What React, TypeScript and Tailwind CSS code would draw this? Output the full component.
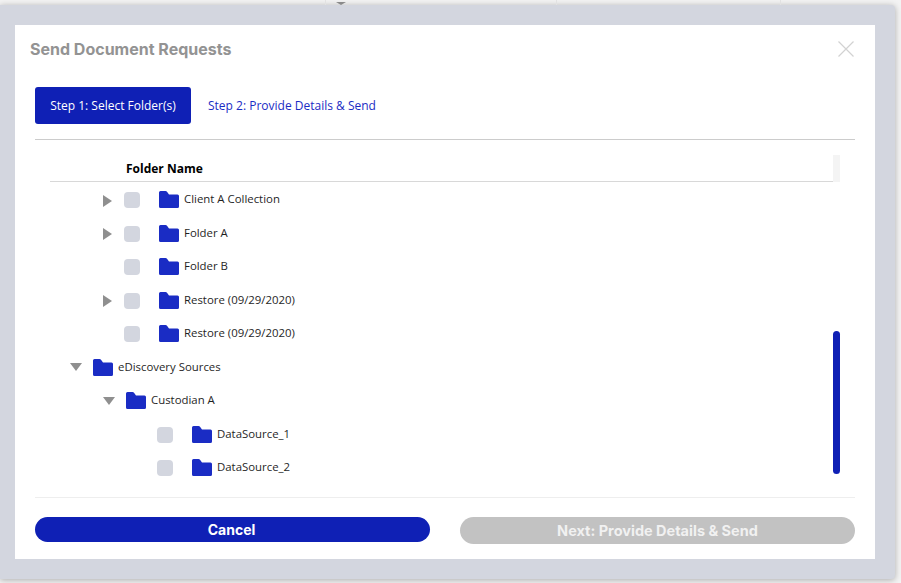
const folders = [
  { name: "Client A Collection", pad: "pl-[53px]", arrow: "right", check: true },
  { name: "Folder A", pad: "pl-[53px]", arrow: "right", check: true },
  { name: "Folder B", pad: "pl-[53px]", arrow: "none", check: true },
  { name: "Restore (09/29/2020)", pad: "pl-[53px]", arrow: "right", check: true },
  { name: "Restore (09/29/2020)", pad: "pl-[53px]", arrow: "none", check: true },
  { name: "eDiscovery Sources", pad: "pl-[20px]", arrow: "down", check: false },
  { name: "Custodian A", pad: "pl-[53px]", arrow: "down", check: false },
  { name: "DataSource_1", pad: "pl-[86px]", arrow: "none", check: true },
  { name: "DataSource_2", pad: "pl-[86px]", arrow: "none", check: true },
];

function Arrow({ dir }: { dir: string }) {
  if (dir === "none") return <span className="w-[21px] shrink-0" />;
  return (
    <svg width="21" height="14" viewBox="0 0 21 14" className="mt-[1px] shrink-0">
      {dir === "right" ? <path d="M0 1 L9 7 L0 13 Z" fill="#8f8f8f" /> : <path d="M0 2 L12 2 L6 10 Z" fill="#8f8f8f" />}
    </svg>
  );
}

function FolderIcon() {
  return (
    <svg width="20" height="17" viewBox="0 0 20 17" className="-mt-[1px] shrink-0">
      <path
        d="M0 1.5 Q0 0 1.5 0 L6.5 0 Q7.5 0 8.2 1 L10 3.5 L18.5 3.5 Q20 3.5 20 5 L20 15.5 Q20 17 18.5 17 L1.5 17 Q0 17 0 15.5 Z"
        fill="#1a2cc4"
      />
    </svg>
  );
}

export default function App() {
  return (
    <div className="relative h-[583px] w-[901px] overflow-hidden bg-[#f3f3f3] font-['Open_Sans',sans-serif]">
      <div className="absolute left-[325px] top-0 h-[5px] w-px bg-[#e2e2e2]" />
      <div className="absolute left-[336px] top-[2px] h-0 w-0 border-x-[5px] border-t-[3px] border-x-transparent border-t-[#8a8a8a]" />
      <div className="absolute left-[556px] top-0 h-[5px] w-px bg-[#e2e2e2]" />
      <div className="absolute left-[780px] top-0 h-[5px] w-px bg-[#e2e2e2]" />

      <div className="mt-[5px] h-[574px] w-[895px] rounded-tr-[4px] rounded-br-[4px] bg-[#d3d6df] pb-5 pl-[15px] pr-5 pt-5 shadow-[0_1px_6px_rgba(0,0,0,0.3)]">
        <div className="flex h-[534px] w-[860px] flex-col bg-white px-5">
          <div className="flex h-[48px] items-center justify-between">
            <h1 className="-ml-[5px] -mt-[1px] font-['Inter',sans-serif] text-[16px] font-bold text-[#939393]">Send Document Requests</h1>
            <svg width="16" height="16" viewBox="0 0 16 16" className="mr-[1px]">
              <path d="M0.5 0.5 L15.5 15.5 M15.5 0.5 L0.5 15.5" stroke="#d2d2d2" strokeWidth="1.2" fill="none" />
            </svg>
          </div>

          <div className="mt-[14px] flex items-center border-b border-[#cccccc] pb-[15px]">
            <div className="flex h-[37px] w-[156px] items-center justify-center rounded-[3px] bg-[#0f20b5] text-[12px] text-white">
              Step 1: Select Folder(s)
            </div>
            <div className="ml-[17px] text-[12px] text-[#1a2cc4]">Step 2: Provide Details &amp; Send</div>
          </div>

          <div className="ml-[15px] mt-[15px] flex h-[27px] w-[790px]">
            <div className="flex h-[27px] w-[783px] items-center border-b border-[#d8d8d8] pl-[76px] pt-[1px] text-[12px] font-bold text-black">
              Folder Name
            </div>
            <div className="h-[27px] w-[7px] bg-[#f4f4f4]" />
          </div>

          <div className="ml-[15px] flex h-[315px] w-[790px]">
            <div className="w-[783px] pt-[1.25px]">
              {folders.map((f, i) => (
                <div key={i} className={`flex h-[33.5px] items-center ${f.pad}`}>
                  <Arrow dir={f.arrow} />
                  {f.check && <span className="mr-[19px] h-4 w-4 shrink-0 rounded-[4px] bg-[#d3d6df]" />}
                  {!f.check && <span className="w-[2px] shrink-0" />}
                  <FolderIcon />
                  <span className="-mt-[2px] ml-[5px] whitespace-nowrap text-[11.4px] text-[#1f1f1f]">{f.name}</span>
                </div>
              ))}
            </div>
            <div className="w-[7px] pt-[149px]">
              <div className="h-[143px] w-[7px] rounded-[4px] bg-[#0f20b5]" />
            </div>
          </div>

          <div className="flex flex-1 items-start gap-[30px] border-t border-[#eeeeee] pt-[19px]">
            <button className="h-[25px] w-[395px] rounded-full bg-[#0f20b5] pr-[2px] font-['Inter',sans-serif] text-[14px] font-bold text-white">
              Cancel
            </button>
            <button className="h-[27px] w-[395px] rounded-full bg-[#c2c2c2] font-['Inter',sans-serif] text-[14.5px] font-bold text-[#f1f1f1]">
              Next: Provide Details &amp; Send
            </button>
          </div>
        </div>
      </div>
    </div>
  );
}
